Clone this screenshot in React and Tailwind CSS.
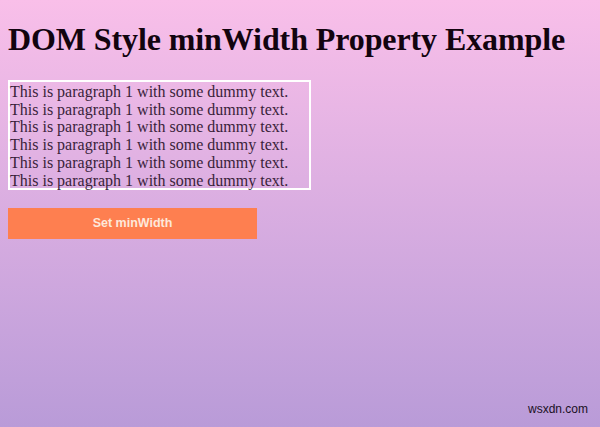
export default function App() {
  const lines = Array.from({ length: 6 });
  return (
    <div
      className="w-[600px] h-[427px] overflow-hidden relative bg-gradient-to-b from-[#f9bfe9] to-[#b99bd8]"
      style={{ fontFamily: '"Liberation Serif", "Times New Roman", serif' }}
    >
      <div className="pt-[21px] pl-[8px]">
        <h1 className="text-[32px] leading-[37px] font-bold text-[#12040f] tracking-[-0.1px]">
          DOM Style minWidth Property Example
        </h1>
        <div className="mt-[22px] w-[303px] h-[110px] border-2 border-white pt-[1px] text-[#3a1f3a] text-[16px] leading-[17.7px]">
          {lines.map((_, i) => (
            <p key={i}>This is paragraph 1 with some dummy text.</p>
          ))}
        </div>
        <button
          className="mt-[18px] w-[249px] h-[31px] bg-[#fe7f50] text-[#fde8da] text-[12.5px] font-bold flex items-center justify-center"
          style={{ fontFamily: '"Liberation Sans", Arial, sans-serif' }}
        >
          Set minWidth
        </button>
      </div>
      <div
        className="absolute right-[12px] bottom-[9px] text-[12px] text-[#1a1024]"
        style={{ fontFamily: '"Liberation Sans", Arial, sans-serif' }}
      >
        wsxdn.com
      </div>
    </div>
  );
}
